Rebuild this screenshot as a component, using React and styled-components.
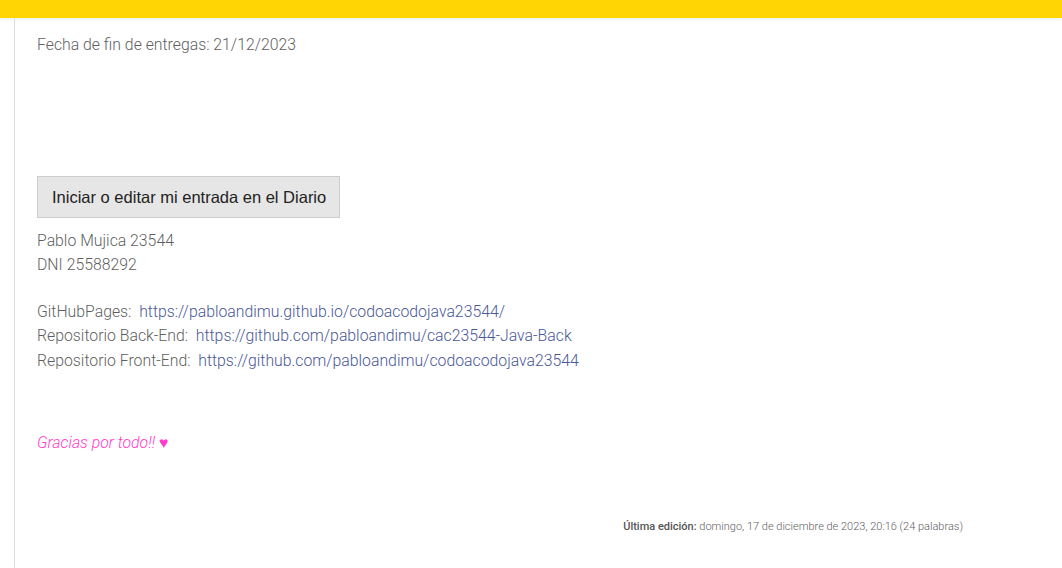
import React from 'react'
import styled, { createGlobalStyle } from 'styled-components'

const GlobalStyle = createGlobalStyle`
  body {
    margin: 0;
    background: #fff;
    font-family: Roboto, "Liberation Sans", sans-serif;
  }
`

const TopBar = styled.div`
  height: 18px;
  background: #ffd503;
  box-shadow: 0 1px 3px rgba(0, 0, 0, 0.08);
`

const Page = styled.div`
  margin-left: 14px;
  border-left: 1px solid #dcdcdc;
  height: 550px;
  box-sizing: border-box;
`

const Content = styled.div`
  padding: 15px 99px 0 22px;
  color: #5f5f5f;
  font-size: 15.8px;
  font-weight: 300;
`

const Line = styled.p`
  margin: 0;
  line-height: ${(p) => p.lh || 24}px;
`

const DiaryButton = styled.button`
  display: block;
  margin-top: 119px;
  height: 42px;
  padding: 0 13px 0 14px;
  background: #e6e6e6;
  border: 1px solid #cdcdcd;
  border-radius: 0;
  font-family: "Liberation Sans", Arial, sans-serif;
  font-size: 16.5px;
  color: #222;
  cursor: pointer;
`

const Block = styled.div`
  margin-top: ${(p) => p.top}px;
`

const Link = styled.a`
  color: #4a5896;
  text-decoration: none;
`

const Thanks = styled.p`
  margin: 58px 0 0;
  line-height: 24px;
  color: #ff3ccb;
  font-style: italic;
`

const Footer = styled.p`
  margin: 64px 0 0;
  text-align: right;
  font-size: 11px;
  line-height: 16px;
  color: #606060;

  strong {
    font-weight: 500;
    color: #555;
  }
`

const links = [
  { label: 'GitHubPages:', url: 'https://pabloandimu.github.io/codoacodojava23544/' },
  { label: 'Repositorio Back-End:', url: 'https://github.com/pabloandimu/cac23544-Java-Back' },
  { label: 'Repositorio Front-End:', url: 'https://github.com/pabloandimu/codoacodojava23544' },
]

const App = () => {
  return (
    <>
      <GlobalStyle />
      <TopBar />
      <Page>
        <Content>
          <Line>Fecha de fin de entregas: 21/12/2023</Line>
          <DiaryButton>Iniciar o editar mi entrada en el Diario</DiaryButton>
          <Block top={11}>
            <Line lh={23.5}>Pablo Mujica 23544</Line>
            <Line lh={23.5}>DNI 25588292</Line>
          </Block>
          <Block top={23.5}>
            {links.map((l) => (
              <Line key={l.url} lh={24.5}>
                {l.label}&nbsp; <Link href={l.url}>{l.url}</Link>
              </Line>
            ))}
          </Block>
          <Thanks>Gracias por todo!! ♥</Thanks>
          <Footer>
            <strong>Última edición:</strong> domingo, 17 de diciembre de 2023, 20:16 (24 palabras)
          </Footer>
        </Content>
      </Page>
    </>
  )
}

export default App
